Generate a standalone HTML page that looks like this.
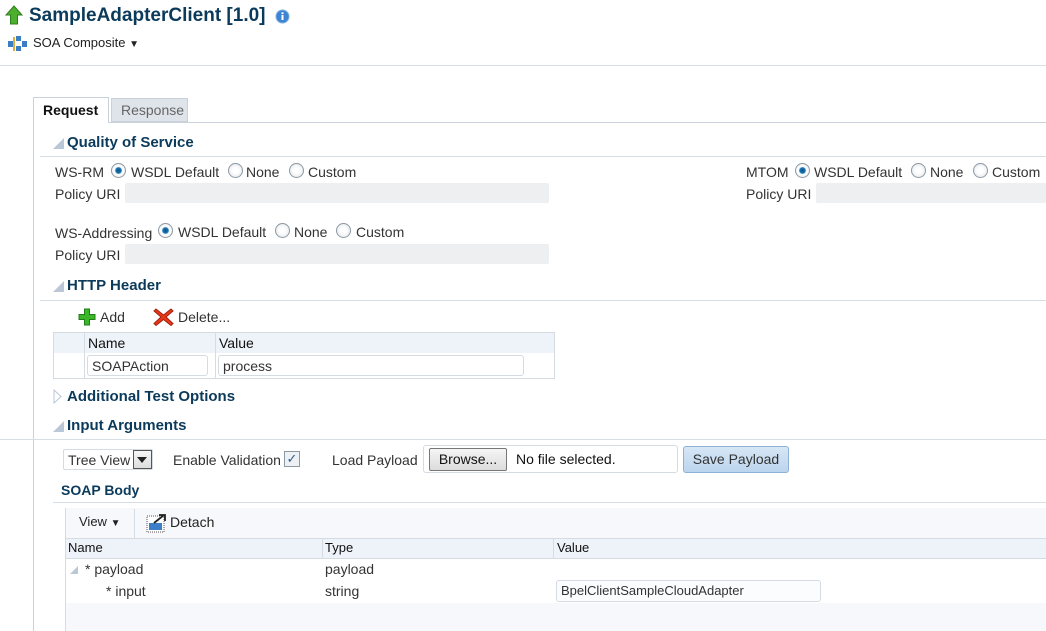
<!DOCTYPE html>
<html><head><style>
*{margin:0;padding:0;box-sizing:border-box}
body{width:1046px;height:631px;background:#fff;font-family:"Liberation Sans",sans-serif;font-size:14px;color:#333;position:relative;overflow:hidden}
.a{position:absolute;white-space:nowrap}
.h{font-weight:bold;font-size:15px;color:#0b3a5b}
.tri{position:absolute;width:0;height:0;border-left:11px solid transparent;border-bottom:11px solid #b9c7d6}
.line{position:absolute;height:1px;background:#d6dee6}
.rad{position:absolute;width:15px;height:15px;border-radius:50%;border:1px solid #8e98a2;background:radial-gradient(circle,#fff 30%,#dde2e7 100%)}
.rad.on{background:radial-gradient(circle,#0d4f7e 0,#1976b8 30%,#fff 42%,#e5e8eb 100%)}
.inp{position:absolute;background:#eeeff1;border-radius:2px}
.box{position:absolute;border:1px solid #d4dbe2;border-radius:3px;background:#fff}
</style></head><body>
<svg class="a" style="left:5px;top:5px" width="18" height="20" viewBox="0 0 18 20"><path d="M9 1 L17 10 L12.5 10 L12.5 19 L5.5 19 L5.5 10 L1 10 Z" fill="#4caf2e" stroke="#2f7d1a"/></svg>
<div class="a" style="left:29px;top:5px;font-size:19px;font-weight:bold;color:#0b3a5b">SampleAdapterClient [1.0]</div>
<svg class="a" style="left:275px;top:9px" width="15" height="15"><circle cx="7.5" cy="7.5" r="6.5" fill="#3d85d0" stroke="#7fb0e3"/><rect x="6.5" y="6" width="2" height="5" fill="#fff"/><rect x="6.5" y="3.3" width="2" height="1.8" fill="#fff"/></svg>
<svg class="a" style="left:8px;top:35px" width="20" height="17"><rect x="0" y="6" width="5" height="6" fill="#3a7fc4"/><rect x="5" y="2" width="2" height="14" fill="#d9b13c"/><rect x="8" y="1" width="5" height="5" fill="#3a7fc4"/><rect x="8" y="11" width="5" height="5" fill="#3a7fc4"/><rect x="14" y="6" width="5" height="6" fill="#3a7fc4"/></svg>
<div class="a" style="left:33px;top:35px;font-size:13px;color:#222">SOA Composite <span style="font-size:10px">▼</span></div>
<div class="line" style="left:0;top:65px;width:1046px"></div>
<div class="a" style="left:33px;top:97px;width:76px;height:26px;border:1px solid #c9d2db;border-bottom:none;background:#fff;font-weight:bold;font-size:14px;color:#111;padding:4px 0 0 9px">Request</div>
<div class="a" style="left:111px;top:98px;width:77px;height:24px;border:1px solid #c9d2db;background:#dfe4ea;font-size:14px;color:#666;padding:3px 0 0 9px">Response</div>
<div class="line" style="left:109px;top:122px;width:937px;background:#c9d2db"></div>
<div class="a" style="left:33px;top:122px;width:1px;height:509px;background:#c9d2db"></div>
<div class="tri" style="left:53px;top:138px"></div>
<div class="a h" style="left:67px;top:134px">Quality of Service</div>
<div class="line" style="left:40px;top:156px;width:1006px"></div>
<div class="a" style="left:55px;top:164px">WS-RM</div>
<div class="rad on" style="left:111px;top:163px"></div><div class="a" style="left:131px;top:164px">WSDL Default</div>
<div class="rad" style="left:228px;top:163px"></div><div class="a" style="left:246px;top:164px">None</div>
<div class="rad" style="left:289px;top:163px"></div><div class="a" style="left:308px;top:164px">Custom</div>
<div class="a" style="left:55px;top:186px">Policy URI</div><div class="inp" style="left:125px;top:183px;width:424px;height:20px"></div>
<div class="a" style="left:746px;top:164px">MTOM</div>
<div class="rad on" style="left:795px;top:163px"></div><div class="a" style="left:814px;top:164px">WSDL Default</div>
<div class="rad" style="left:911px;top:163px"></div><div class="a" style="left:930px;top:164px">None</div>
<div class="rad" style="left:973px;top:163px"></div><div class="a" style="left:992px;top:164px">Custom</div>
<div class="a" style="left:746px;top:186px">Policy URI</div><div class="inp" style="left:816px;top:183px;width:240px;height:20px"></div>
<div class="a" style="left:55px;top:225px">WS-Addressing</div>
<div class="rad on" style="left:158px;top:223px"></div><div class="a" style="left:178px;top:224px">WSDL Default</div>
<div class="rad" style="left:275px;top:223px"></div><div class="a" style="left:294px;top:224px">None</div>
<div class="rad" style="left:336px;top:223px"></div><div class="a" style="left:356px;top:224px">Custom</div>
<div class="a" style="left:55px;top:247px">Policy URI</div><div class="inp" style="left:125px;top:244px;width:424px;height:20px"></div>
<div class="tri" style="left:53px;top:281px"></div>
<div class="a h" style="left:67px;top:277px">HTTP Header</div>
<div class="line" style="left:40px;top:300px;width:1006px"></div>
<svg class="a" style="left:78px;top:308px" width="18" height="18"><path d="M6.5 1h5v5.5h5.5v5h-5.5v5.5h-5v-5.5h-5.5v-5h5.5z" fill="#3cb72a" stroke="#1f7f14"/></svg>
<div class="a" style="left:100px;top:309px">Add</div>
<svg class="a" style="left:153px;top:307px" width="21" height="20"><path d="M3 2 L10.5 8 L18 2 L20 4 L13 10 L20 16.5 L18 18.5 L10.5 12.5 L3 18.5 L1 16.5 L8 10 L1 4Z" fill="#e8371b" stroke="#a3200c"/></svg>
<div class="a" style="left:178px;top:309px">Delete...</div>
<div class="a" style="left:53px;top:332px;width:502px;height:47px;border:1px solid #d4dbe2"></div>
<div class="a" style="left:54px;top:333px;width:500px;height:20px;background:#eef2f9"></div>
<div class="a" style="left:84px;top:333px;width:1px;height:45px;background:#d4dbe2"></div>
<div class="a" style="left:215px;top:333px;width:1px;height:45px;background:#d4dbe2"></div>
<div class="a" style="left:88px;top:335px;color:#111">Name</div>
<div class="a" style="left:219px;top:335px;color:#111">Value</div>
<div class="box" style="left:87px;top:355px;width:121px;height:21px"></div><div class="a" style="left:92px;top:358px">SOAPAction</div>
<div class="box" style="left:218px;top:355px;width:306px;height:21px"></div><div class="a" style="left:223px;top:358px">process</div>
<svg class="a" style="left:53px;top:389px" width="9" height="15"><path d="M1 1 L8 7.5 L1 14Z" fill="#fff" stroke="#b9c7d6"/></svg>
<div class="a h" style="left:67px;top:388px">Additional Test Options</div>
<div class="tri" style="left:53px;top:421px"></div>
<div class="a h" style="left:67px;top:417px">Input Arguments</div>
<div class="line" style="left:0;top:439px;width:1046px"></div>
<div class="box" style="left:63px;top:449px;width:90px;height:21px;border-radius:2px"></div>
<div class="a" style="left:68px;top:452px">Tree View</div>
<div class="a" style="left:133px;top:450px;width:19px;height:19px;border:1px solid #555;background:linear-gradient(#f7f7f7,#ddd)"></div>
<div class="a" style="left:137px;top:457px;border-left:5px solid transparent;border-right:5px solid transparent;border-top:6px solid #222"></div>
<div class="a" style="left:173px;top:452px">Enable Validation</div>
<div class="a" style="left:284px;top:451px;width:16px;height:16px;border:1px solid #8e98a2;background:#eef1f4;font-size:13px;color:#2e5d8a;text-align:center;line-height:14px">✓</div>
<div class="a" style="left:332px;top:452px">Load Payload</div>
<div class="box" style="left:423px;top:445px;width:255px;height:28px"></div>
<div class="a" style="left:429px;top:448px;width:78px;height:23px;border:1px solid #777;border-radius:2px;background:linear-gradient(#f5f5f5,#dcdcdc);color:#111;text-align:center;line-height:20px">Browse...</div>
<div class="a" style="left:516px;top:451px;color:#111">No file selected.</div>
<div class="a" style="left:683px;top:446px;width:106px;height:27px;border:1px solid #8db2d6;border-radius:3px;background:linear-gradient(#d6e6f5,#bcd5ee);text-align:center;line-height:25px">Save Payload</div>
<div class="a" style="left:61px;top:482px;font-weight:bold;font-size:14px;color:#0b3a5b">SOAP Body</div>
<div class="line" style="left:53px;top:502px;width:993px"></div>
<div class="a" style="left:65px;top:508px;width:981px;height:123px;background:#f6f8fb;border-left:1px solid #d4dbe2"></div>
<div class="a" style="left:79px;top:514px;color:#222;font-size:13px">View <span style="font-size:10px">▼</span></div>
<div class="a" style="left:134px;top:509px;width:1px;height:29px;background:#d4dbe2"></div>
<svg class="a" style="left:146px;top:513px" width="21" height="20"><rect x="1" y="3" width="17" height="16" fill="#fff" stroke="#555" stroke-dasharray="1 1"/><rect x="3" y="10" width="13" height="7" fill="#3f7fc7"/><path d="M8 10 L18 2 M13 2h6v6" stroke="#222" stroke-width="1.8" fill="none"/></svg>
<div class="a" style="left:170px;top:514px;color:#222">Detach</div>
<div class="a" style="left:66px;top:538px;width:980px;height:21px;background:#eef2f9;border-top:1px solid #d4dbe2;border-bottom:1px solid #d4dbe2"></div>
<div class="a" style="left:322px;top:538px;width:1px;height:21px;background:#d4dbe2"></div>
<div class="a" style="left:553px;top:538px;width:1px;height:21px;background:#d4dbe2"></div>
<div class="a" style="left:68px;top:540px;color:#111;font-size:13px">Name</div>
<div class="a" style="left:325px;top:540px;color:#111;font-size:13px">Type</div>
<div class="a" style="left:557px;top:540px;color:#111;font-size:13px">Value</div>
<div class="a" style="left:66px;top:559px;width:980px;height:44px;background:#fff"></div>
<div class="a" style="left:70px;top:566px;border-left:8px solid transparent;border-bottom:8px solid #b9c7d6"></div>
<div class="a" style="left:85px;top:561px">* payload</div>
<div class="a" style="left:325px;top:561px">payload</div>
<div class="a" style="left:106px;top:583px">* input</div>
<div class="a" style="left:325px;top:583px">string</div>
<div class="box" style="left:556px;top:580px;width:265px;height:22px;background:#fbfcfd"></div>
<div class="a" style="left:561px;top:583px;font-size:13px">BpelClientSampleCloudAdapter</div>
</body></html>
